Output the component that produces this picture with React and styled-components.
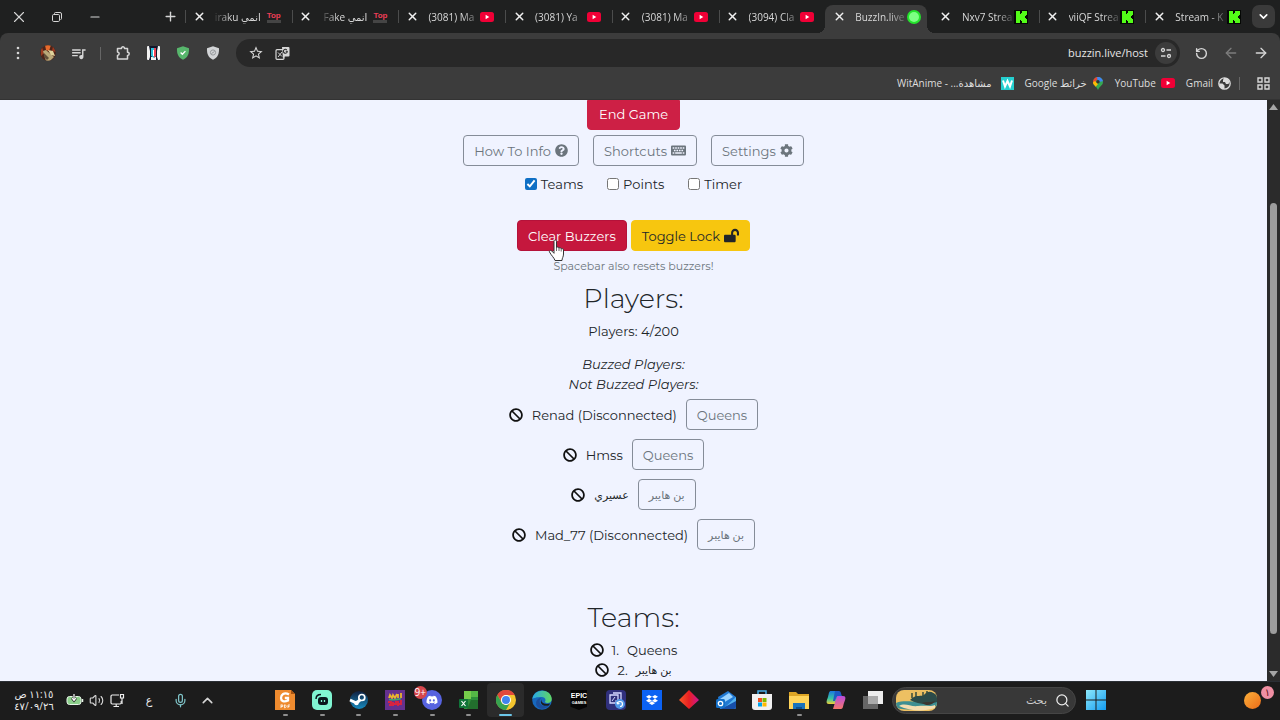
import React from "react";
import styled, { createGlobalStyle, css } from "styled-components";
import { FaQuestionCircle, FaKeyboard, FaCog, FaLockOpen, FaBan, FaDropbox, FaDiscord } from "react-icons/fa";
import { MdQueueMusic, MdStarBorder } from "react-icons/md";
import { X, Plus, Minus, ChevronDown, ChevronUp, RotateCcw, ArrowLeft, ArrowRight, Search, Mic, Volume2 } from "lucide-react";

const Global = createGlobalStyle`
  * { box-sizing: border-box; }
  html, body { margin: 0; height: 100%; overflow: hidden; }
  #root { height: 100vh; }
  button, input { font: inherit; margin: 0; }
  svg { display: block; flex: none; }
`;

const uiFont = `"Open Sans", "Noto Sans", "DejaVu Sans", sans-serif`;

/* ---------- shell ---------- */
const Shell = styled.div`
  display: flex;
  flex-direction: column;
  height: 100vh;
  background: #1f2020;
  color: #dcdcdc;
  font: 10px/16px ${uiFont};
`;

const IconButton = styled.button`
  display: flex;
  align-items: center;
  justify-content: center;
  flex: none;
  width: ${(p) => p.$w || 30}px;
  height: ${(p) => p.$h || 26}px;
  padding: 0;
  border: 0;
  background: none;
  color: ${(p) => p.$color || "#d6d6d6"};
`;

/* ---------- tab strip ---------- */
const TabStrip = styled.header`
  display: flex;
  align-items: stretch;
  height: 33px;
  flex: none;
`;

const WindowButtons = styled.div`
  display: flex;
  align-items: center;
  width: 185px;
  flex: none;
`;

const NewTab = styled(IconButton)`
  margin-left: auto;
`;

const Tabs = styled.nav`
  display: flex;
  flex: 1;
  min-width: 0;
`;

const TabItem = styled.div`
  position: relative;
  display: flex;
  align-items: center;
  flex: 1 1 0;
  min-width: 0;
  padding: 0 11px 0 4px;
  border-radius: 8px 8px 0 0;
  ${(p) =>
    p.$active &&
    css`
      background: #3c3c3c;
      margin: 5px 5px 0 0;
      padding: 0 6px 5px 4px;
      &::before,
      &::after {
        content: "";
        position: absolute;
        bottom: 0;
        width: 8px;
        height: 8px;
      }
      &::before {
        left: -8px;
        background: radial-gradient(circle at 0 0, transparent 8px, #3c3c3c 8px);
      }
      &::after {
        right: -8px;
        background: radial-gradient(circle at 100% 0, transparent 8px, #3c3c3c 8px);
      }
    `}
  ${(p) =>
    p.$divided &&
    css`
      background: linear-gradient(#4b4c4c, #4b4c4c) 0 50% / 1px 13px no-repeat;
    `}
`;

const TabTitle = styled.span`
  flex: 1;
  min-width: 0;
  margin: 0 ${(p) => (p.dir === "rtl" ? 6 : 0)}px 0 6px;
  white-space: nowrap;
  color: #d8d8d8;
  mask-image: linear-gradient(${(p) => (p.dir === "rtl" ? "to left" : "to right")}, #000 65%, rgba(0, 0, 0, 0.15));
`;

const TabSearch = styled(IconButton)`
  margin: 5px 5px 5px 0;
  border-radius: 7px;
  background: #3a3a3a;
  color: #fff;
`;

/* ---------- toolbar ---------- */
const Toolbar = styled.div`
  flex: none;
  height: 67px;
  padding-top: 6px;
  background: #3c3c3c;
  border-radius: 8px 8px 0 0;
  border-bottom: 1px solid #333;
`;

const ToolRow = styled.div`
  display: flex;
  align-items: center;
  height: 28px;
  padding: 0 4px 0 3px;
`;

const Divider = styled.span`
  width: 1px;
  height: 13px;
  margin: 0 ${(p) => p.$gap}px;
  background: #666;
`;

const Omnibox = styled.form`
  display: flex;
  align-items: center;
  flex: 1;
  min-width: 0;
  height: 28px;
  margin: 0 6px 0 8px;
  padding: 0 3px 0 6px;
  border-radius: 14px;
  background: #282828;
`;

const Address = styled.input`
  flex: 1;
  min-width: 0;
  padding: 0 7px;
  border: 0;
  outline: 0;
  background: none;
  color: #e6e6e6;
  font-size: 11px;
  text-align: right;
`;

const SiteInfo = styled(IconButton)`
  border-radius: 50%;
  background: #3c3c3c;
`;

const BookmarkRow = styled.nav`
  display: flex;
  align-items: center;
  justify-content: flex-end;
  gap: 11px;
  height: 32px;
  padding-right: 2px;
`;

const Bookmark = styled.a`
  display: flex;
  align-items: center;
  gap: ${(p) => p.$gap || 5}px;
  color: #dedede;
  text-decoration: none;
  white-space: nowrap;
`;

const BookmarkEnd = styled.div`
  display: flex;
  align-items: center;
`;

/* ---------- web page ---------- */
const Viewport = styled.div`
  display: flex;
  flex: 1;
  min-height: 0;
`;

const Page = styled.main`
  display: flex;
  flex-direction: column;
  align-items: center;
  flex: 1;
  min-width: 0;
  overflow: hidden;
  background: #f0f3ff;
  color: #212529;
  font: 13px/20px Montserrat, Inter, "DejaVu Sans", sans-serif;
`;

const palette = {
  danger: css`background: #cd2045; border-color: #cd2045; color: #fff;`,
  pressed: css`background: #c5173d; border-color: #b5123a; color: #fff;`,
  warning: css`background: #f7c60f; border-color: #f7c60f; color: #212529;`,
  outline: css`background: none; border-color: #858c98; color: #6c757d;`,
};

const Button = styled.button`
  position: relative;
  display: inline-flex;
  align-items: center;
  justify-content: center;
  gap: 4px;
  height: 31px;
  padding: 0 10px;
  border: 1px solid;
  border-radius: 4px;
  white-space: nowrap;
  ${(p) => palette[p.$variant]}
`;

const EndButton = styled(Button)`
  height: 30px;
  padding: 0 11px 2px;
  border-radius: 0 0 4px 4px;
`;

const ButtonRow = styled.div`
  display: flex;
  flex: none;
  gap: ${(p) => p.$gap}px;
  margin-top: ${(p) => p.$top}px;
`;

const Option = styled.label`
  display: flex;
  align-items: center;
  gap: 4px;
`;

const Check = styled.input`
  width: 12px;
  height: 12px;
  accent-color: #0f6fc5;
`;

const Hint = styled.small`
  margin-top: 7px;
  font-size: 11px;
  line-height: 16px;
  color: #6c757d;
`;

const Heading = styled.h2`
  margin: ${(p) => p.$top}px 0 5px;
  font-size: 27px;
  font-weight: 300;
  line-height: 34px;
`;

const Count = styled.p`
  margin: 0 0 13px;
`;

const Group = styled.em`
  font-style: italic;
`;

const PlayerList = styled.ul`
  display: flex;
  flex-direction: column;
  align-items: center;
  gap: 9px;
  margin: 5px 0 0;
  padding: 0;
  list-style: none;
`;

const Player = styled.li`
  display: flex;
  align-items: center;
  gap: 9px;
`;

const TeamList = styled.ul`
  margin: 0;
  padding: 0;
  list-style: none;
`;

const Team = styled.li`
  display: flex;
  align-items: center;
  justify-content: center;
  gap: 8px;
`;

const Name = styled.span`
  &:lang(ar) {
    font-size: 11px;
  }
`;

const Kick = styled(IconButton)`
  color: #111;
`;

const Pointer = styled.svg`
  position: absolute;
  left: 30px;
  top: 18px;
  z-index: 2;
`;

const Scrollbar = styled.div`
  display: flex;
  flex-direction: column;
  align-items: center;
  width: 13px;
  flex: none;
  padding: 4px 0;
  background: #2b2b2b;
`;

const Track = styled.div`
  display: flex;
  flex-direction: column;
  flex: 1;
  width: 7px;
`;

const Thumb = styled.div`
  flex: 431;
  border-radius: 4px;
  background: #9d9d9d;
`;

const Space = styled.div`
  flex: ${(p) => p.$grow};
`;

/* ---------- taskbar ---------- */
const Taskbar = styled.footer`
  display: flex;
  align-items: center;
  flex: none;
  height: 39px;
  padding: 0 6px 2px 0;
  background: #1c1c1c;
  border-top: 1px solid #2b2f35;
`;

const Tray = styled.div`
  display: flex;
  align-items: center;
  width: 267px;
  flex: none;
  padding-left: 14px;
`;

const Clock = styled.time`
  width: 40px;
  margin-right: 10px;
  line-height: 12px;
  text-align: center;
  color: #ececec;
  white-space: nowrap;
`;

const Language = styled.button`
  width: 34px;
  margin-left: 4px;
  padding: 0;
  border: 0;
  background: none;
  color: #eee;
  font-size: 11px;
`;

const Apps = styled.div`
  display: flex;
  flex: 0 1 624px;
`;

const AppButton = styled.button`
  position: relative;
  display: flex;
  align-items: center;
  justify-content: center;
  flex: 1;
  height: 34px;
  padding: 0;
  border: 0;
  border-radius: 4px;
  background: ${(p) => (p.$active ? "#2b2b2b" : "none")};
  &::after {
    content: "";
    position: absolute;
    bottom: 1px;
    width: ${(p) => (p.$active ? 13 : 5)}px;
    height: 2px;
    border-radius: 1px;
    background: ${(p) => (p.$active ? "#6cc6e8" : p.$open ? "#8f8f8f" : "transparent")};
  }
`;

const Badge = styled.span`
  position: absolute;
  z-index: 1;
  height: 13px;
  min-width: 13px;
  border-radius: 7px;
  line-height: 13px;
  text-align: center;
  background: ${(p) => p.$bg};
  color: ${(p) => p.$fg};
  top: ${(p) => p.$top}px;
  ${(p) => p.$side}: 0;
`;

const SearchBox = styled.label`
  display: flex;
  align-items: center;
  flex: 0 1 184px;
  min-width: 0;
  height: 27px;
  margin-left: 1px;
  padding: 0 5px 0 3px;
  border: 1px solid #454545;
  border-radius: 14px;
  background: #383838;
  color: #eee;
`;

const SearchInput = styled.input`
  flex: 1;
  min-width: 0;
  padding: 0 8px;
  border: 0;
  outline: 0;
  background: none;
  color: #ccc;
  font-size: 11px;
  &::placeholder { color: #ccc; opacity: 1; }
`;

const Start = styled(IconButton)`
  margin-left: 4px;
`;

const Widgets = styled(IconButton)`
  position: relative;
  margin-left: auto;
`;

/* ---------- drawings ---------- */
const YouTube = () => (
  <svg width="14" height="14" viewBox="0 0 14 14">
    <rect y="2" width="14" height="10" rx="2.5" fill="#f00036" />
    <path d="M5.6 4.8v4.4L9.3 7z" fill="#fff" />
  </svg>
);

const KickLogo = () => (
  <svg width="14" height="14" viewBox="0 0 14 14">
    <rect width="14" height="14" fill="#050805" />
    <path d="M2 1h4v3h1V3h1V1h5v4h-1v1h-1v2h1v1h1v4H8v-2H7v-1H6v3H2z" fill="#53fc18" />
  </svg>
);

const TopLogo = styled.span`
  display: flex;
  justify-content: center;
  width: 14px;
  color: #ee3e57;
  font: bold 8px/9px "Liberation Sans Narrow", "Liberation Sans", sans-serif;
  border-bottom: 3px solid #454545;
`;

const Buzz = () => (
  <svg width="14" height="14" viewBox="0 0 14 14">
    <circle cx="7" cy="7" r="7" fill="#24e32c" />
    <circle cx="7" cy="7" r="5" fill="#7dff84" />
  </svg>
);

const Restore = () => (
  <svg width="10" height="10" viewBox="0 0 10 10" fill="none" stroke="currentColor">
    <rect x=".5" y="2.5" width="7" height="7" rx="1.2" />
    <path d="M2.5 2V1.5a1 1 0 0 1 1-1h4.500a1.500 1.500 0 0 1 1.500 1.500V6.500a1 1 0 0 1-1 1" />
  </svg>
);

const Dots = () => (
  <svg width="4" height="14" viewBox="0 0 4 14" fill="currentColor">
    <circle cx="2" cy="2" r="1.3" /><circle cx="2" cy="7" r="1.3" /><circle cx="2" cy="12" r="1.3" />
  </svg>
);

const Avatar = () => (
  <svg width="16" height="16" viewBox="0 0 16 16">
    <clipPath id="avatar"><circle cx="8" cy="8" r="7.800" /></clipPath>
    <g clipPath="url(#avatar)">
      <rect width="16" height="16" fill="#4d241a" />
      <path d="M5 0h6L9 6 6 5z" fill="#e66b2c" />
      <path d="M2 2l2 6-3 3V3zM13 1l3 6-4-1z" fill="#9b3a20" />
      <path d="M3 6l3-1 8 7-4 4H6z" fill="#b9a778" />
      <path d="M8 5l5 1 2 5-4-1z" fill="#e1d39b" />
      <path d="M4 8l5 5-2 2-3-3z" fill="#604e39" />
    </g>
  </svg>
);

const Puzzle = () => (
  <svg width="16" height="16" viewBox="0 0 16 16" fill="none" stroke="currentColor" strokeWidth="1.5" strokeLinejoin="round">
    <path d="M2.500 3.500h4c-.3-2.200 3.200-2.200 3 0h3v3.700c2.300 0 2.300 3.200 0 3.200v3.600h-10v-3.500c2.200-.6 2.200-3 0-3.500z" />
  </svg>
);

const Glitch = () => (
  <svg width="13" height="14" viewBox="0 0 13 14">
    <rect width="13" height="14" rx="1" fill="#f2f2f2" />
    <path d="M2 0h9l-1 5v6l1 3H9v-3H4v3H2l1-3V5z" fill="#12162b" />
    <path d="M4 2h5v8l-2 2-3-2z" fill="#2ec2dc" />
    <path d="M7 2h2v8L7 12z" fill="#ef4456" />
    <path d="M6 4h1v6H6z" fill="#fff" />
  </svg>
);

const Shield = ({ fill, check }) => (
  <svg width="14" height="14" viewBox="0 0 14 14">
    <path d="M7 .3l6 2c.3 5-1 9.300-6 11.400C2 11.600.7 7.300 1 2.300z" fill={fill} />
    {check ? (
      <path d="M4.600 6.500l1.800 1.800 3-3.200" fill="none" stroke="#fff" strokeWidth="1.300" />
    ) : (
      <g fill="none" stroke="#96999c"><circle cx="7" cy="6.500" r="2.600" /><path d="M5.500 7.500l3-2" /></g>
    )}
  </svg>
);

const Translate = () => (
  <svg width="15" height="15" viewBox="0 0 15 15">
    <rect x="1" y="3.700" width="8" height="9.600" rx="1" fill="none" stroke="#d6d6d6" strokeWidth="1.200" />
    <path d="M3 6.500l4 4M7 6l-4 5" stroke="#d6d6d6" fill="none" />
    <path d="M7 1h6.500a1 1 0 0 1 1 1v7.500a1 1 0 0 1-1 1H9.500L8 13z" fill="#d6d6d6" />
    <path d="M12.400 5.300H10.700M12.400 5.300a2 2 0 1 1-.6-1.500" stroke="#282828" strokeWidth="1.100" fill="none" />
  </svg>
);

const Tune = () => (
  <svg width="12" height="12" viewBox="0 0 12 12" fill="none" stroke="currentColor" strokeWidth="1.300">
    <circle cx="3" cy="3" r="1.500" /><path d="M6.500 3H11M1 9h4.500" /><circle cx="9" cy="9" r="1.500" />
  </svg>
);

const WitLogo = () => (
  <svg width="13" height="13" viewBox="0 0 13 13">
    <rect width="13" height="13" fill="#25cfd0" />
    <path d="M2 3.500l2 6 2.500-5.500L9 9.500l2-6" fill="none" stroke="#fff" strokeWidth="2" />
  </svg>
);

const MapPin = () => (
  <svg width="12" height="13" viewBox="0 0 12 13">
    <clipPath id="pin"><path d="M6 0a5 5 0 0 1 5 5c0 3.500-3.500 4-5 8-1.500-4-5-4.500-5-8a5 5 0 0 1 5-5z" /></clipPath>
    <g clipPath="url(#pin)">
      <rect width="12" height="13" fill="#34a853" />
      <path d="M0 0h7L2 7H0z" fill="#ea4335" /><path d="M5 0h7v4L6 5z" fill="#4285f4" />
      <path d="M0 6l3-2 3 3-4 5z" fill="#fbbc04" />
    </g>
    <circle cx="6" cy="4.800" r="1.700" fill="#333" />
  </svg>
);

const Globe = () => (
  <svg width="13" height="13" viewBox="0 0 13 13">
    <circle cx="6.500" cy="6.500" r="5.700" fill="none" stroke="#dcdcdc" strokeWidth="1.300" />
    <path d="M1 6.500h3.500l2 2v3.500C3.500 12 1 9.500 1 6.500zM6 1h3l2.500 3.500-1 2.500H8L7 5H5V3z" fill="#dcdcdc" />
  </svg>
);

const GridIcon = () => (
  <svg width="13" height="13" viewBox="0 0 13 13" fill="none" stroke="#d6d6d6" strokeWidth="1.400">
    <path d="M1 1h4v4H1zM8 1h4v4H8zM1 8h4v4H1zM8 8h4v4H8z" />
  </svg>
);

const Hand = () => (
  <Pointer width="17" height="23" viewBox="0 0 17 23" aria-hidden="true">
    <path
      d="M6 2.500c0-2 2.500-2 2.500 0v6c.5-.8 2.300-.5 2.400.6.700-.8 2.300-.3 2.300.7.800-.6 2.300 0 2.300 1.200v4c0 3-1.500 4-1.500 6.500H7c-.3-2-4-5.500-5.500-8.500-.6-1.300 1.200-2.300 2.300-1l2.200 2.300z"
      fill="#fff" stroke="#333" strokeWidth="1"
    />
    <path d="M8.500 8v4M11 9v3M13.200 10v2.500" stroke="#444" strokeWidth=".8" />
  </Pointer>
);

const ArrowTip = ({ down }) => (
  <svg width="9" height="6" viewBox="0 0 9 6"><path d={down ? "M0 0h9L4.500 6z" : "M0 6h9L4.500 0z"} fill="#a5a5a5" /></svg>
);

const Battery = () => (
  <svg width="18" height="14" viewBox="0 0 18 14">
    <rect x="1" y="3.500" width="14" height="8" rx="2.500" fill="#8ccf8b" stroke="#e8f5e8" />
    <path d="M16.500 6v3" stroke="#e8f5e8" strokeWidth="1.500" />
    <path d="M8 1v6M6 5l2 2.500L10 5" stroke="#1c1c1c" fill="none" strokeWidth="2.600" />
    <path d="M8 1v6M6 5l2 2.500L10 5" stroke="#fff" fill="none" strokeWidth="1.200" />
  </svg>
);

const Network = () => (
  <svg width="15" height="15" viewBox="0 0 15 15" fill="none" stroke="#eee" strokeWidth="1.200">
    <path d="M9 2H2.200A1.200 1.200 0 0 0 1 3.200v6.600A1.200 1.200 0 0 0 2.200 11H10a1.200 1.200 0 0 0 1.200-1.200V8M3.500 13.500h5.500M6.200 11v2.500" />
    <path d="M10.500 1.500h3v3.500h-3zM12 5v6" />
  </svg>
);

const EpicShield = styled.span`
  display: flex;
  flex-direction: column;
  align-items: center;
  justify-content: center;
  width: 17px;
  height: 20px;
  padding-bottom: 3px;
  background: #050505;
  color: #fff;
  font: bold 7px/8px "Liberation Sans Narrow", "Liberation Sans", sans-serif;
  clip-path: polygon(0 0, 100% 0, 100% 84%, 50% 100%, 0 84%);
`;

const EpicSub = styled.span`
  font-size: 4px;
  line-height: 5px;
`;

const art = (children) => (
  <svg width="20" height="20" viewBox="0 0 20 20">{children}</svg>
);

const apps = [
  { name: "PDF", open: true, icon: art(<>
    <path d="M0 0h16l4 4v16H0z" fill="#ee8b2f" /><path d="M16 0l4 4h-4z" fill="#a75310" />
    <path d="M14 4.500C9 1.500 6 5 6 8s3 4.500 7 2.500V8H9.800" fill="none" stroke="#fff" strokeWidth="2.300" />
    <path d="M6 14.500v3.500M6 15h1.800v1.500H6M9.500 14.800v3c2.300 0 2.300-3 0-3M13 18v-3h2M13 16.500h1.500" stroke="#fff" strokeWidth=".8" fill="none" /></>) },
  { name: "Streamlabs", open: true, icon: art(<>
    <rect width="20" height="20" rx="5" fill="#80f5d2" />
    <rect x="6" y="7" width="10" height="8" rx="3" fill="#09161d" />
    <path d="M4 9c0-3 1.500-4.500 5-4.500" stroke="#09161d" strokeWidth="1.500" fill="none" />
    <path d="M9.500 10v2M12.500 10v2" stroke="#80f5d2" strokeWidth="1.300" /></>) },
  { name: "Steam", open: true, icon: art(<>
    <defs><linearGradient id="steam" x1="0" y1="0" x2="0" y2="1"><stop stopColor="#11203f" /><stop offset="1" stopColor="#178bbf" /></linearGradient></defs>
    <circle cx="10" cy="10" r="9" fill="url(#steam)" />
    <circle cx="12.800" cy="7.500" r="3" fill="none" stroke="#fff" strokeWidth="1.700" />
    <path d="M1 10l6.500 3L11 10" stroke="#fff" strokeWidth="3" fill="none" /><circle cx="7.500" cy="13" r="2.300" fill="#fff" /></>) },
  { name: "Game", open: true, icon: art(<>
    <rect width="20" height="20" fill="#65308f" />
    <path d="M4 8l1-3 2 3 1-3 2 3 2-4M13 8V4M16 8V3" stroke="#e9b52f" strokeWidth="1.800" fill="none" />
    <path d="M4 9.500c4 0 6 1 12-1" stroke="#43a66a" strokeWidth="1.500" fill="none" />
    <path d="M3 12h3v3H4M8 12v4M8 14h3v-3M13 11v5M13 14h3v-4" stroke="#db2440" strokeWidth="1.900" fill="none" /></>) },
  { name: "Discord", open: true, badge: "9+", icon: art(<>
    <circle cx="10" cy="10" r="10" fill="#5763e0" /><FaDiscord x="4" y="4" size={12} color="#fff" /></>) },
  { name: "Excel", open: true, icon: art(<>
    <path d="M5 1h14v18H5z" fill="#2d8f3b" /><path d="M5 1h7v8H5z" fill="#76ce4b" /><path d="M12 1h7v6h-7z" fill="#54b746" /><path d="M12 10h7v9H8z" fill="#226f2d" />
    <rect x="0" y="9" width="9" height="9" rx="1" fill="#107439" /><path d="M2.500 11l4 5M6.500 11l-4 5" stroke="#fff" strokeWidth="1.200" /></>) },
  { name: "Chrome", active: true, icon: art(<>
    <circle cx="10" cy="10" r="10" fill="#f4c52e" />
    <path d="M1.300 5A10 10 0 0 1 18.700 5H10a5 5 0 0 0-4.300 7.500z" fill="#e0483b" />
    <path d="M1.300 5A10 10 0 0 0 10 20l4.300-7.500A5 5 0 0 1 5.700 12.500z" fill="#37a350" />
    <circle cx="10" cy="10" r="5" fill="#fff" /><circle cx="10" cy="10" r="4" fill="#4084ee" /></>) },
  { name: "Edge", icon: art(<>
    <defs><linearGradient id="edge"><stop stopColor="#28a9e8" /><stop offset="1" stopColor="#62d85f" /></linearGradient></defs>
    <circle cx="10" cy="10" r="9.800" fill="#1768bd" />
    <path d="M.3 9C2-2 19-2 19.800 9c0 4-5 5-7 3 2-3-.5-5-3-5C5 7 1 8 .3 9z" fill="url(#edge)" />
    <path d="M9 8c-4 5 1 10 8 7.500C12 22 2 18 4.500 11 5.500 8.500 8 7.500 9 8z" fill="#1c4e9c" />
    <path d="M10 9c-2 3 2 6 8 4.500l-1 2c-7 1.500-10-3-7-6.500z" fill="#1c1c1c" /></>) },
  { name: "Epic Games", icon: <EpicShield>EPIC<EpicSub>GAMES</EpicSub></EpicShield> },
  { name: "Capture", icon: art(<>
    <rect width="20" height="20" rx="4" fill="#30307c" />
    <path d="M4 5h8v8H4zM7 3h8v7" fill="none" stroke="#d5d8ff" strokeWidth="1.300" /><path d="M6 11l3-4M9 11h2" stroke="#d5d8ff" />
    <circle cx="14" cy="14" r="5" fill="#5197e8" /><path d="M11.500 14a2.500 2.500 0 1 1 2.500 2.500M11.500 14l-.5-2M11.500 14l2-.5" stroke="#fff" strokeWidth="1.200" fill="none" /></>) },
  { name: "Dropbox", icon: art(<><rect width="20" height="20" fill="#0b62f3" /><FaDropbox x="4" y="4" size={12} color="#fff" /></>) },
  { name: "Diamond", icon: art(<>
    <defs><linearGradient id="dia"><stop stopColor="#f65a28" /><stop offset=".5" stopColor="#e91f22" /><stop offset="1" stopColor="#cb1694" /></linearGradient></defs>
    <path d="M10 0l10 10-10 9L0 10z" fill="url(#dia)" /></>) },
  { name: "Outlook", icon: art(<>
    <path d="M2 7l10-6 8 6v10a2 2 0 0 1-2 2H4z" fill="#2179d3" /><path d="M4 9l9-6 4 4-10 6z" fill="#9bd4ff" /><path d="M20 7v10a2 2 0 0 1-2 2H7z" fill="#54b3ef" /><path d="M5 19l15-8v6a2 2 0 0 1-2 2z" fill="#174fa9" />
    <rect y="9" width="9" height="9" rx="1.500" fill="#1470c8" /><circle cx="4.500" cy="13.500" r="2.200" fill="none" stroke="#fff" strokeWidth="1.300" /></>) },
  { name: "Store", icon: art(<>
    <path d="M6 4V1h8v3" fill="none" stroke="#48aee8" strokeWidth="1.500" /><path d="M0 4h20v13a3 3 0 0 1-3 3H3a3 3 0 0 1-3-3z" fill="#f1f1f1" />
    <path d="M6 8h4v4H6z" fill="#f25022" /><path d="M10.500 8h4v4h-4z" fill="#7fba00" /><path d="M6 12.500h4v4H6z" fill="#00a4ef" /><path d="M10.500 12.500h4v4h-4z" fill="#ffb900" /></>) },
  { name: "Files", open: true, icon: art(<>
    <path d="M0 2h7l2 2h11v5H0z" fill="#dda525" /><path d="M0 6h20v13H0z" fill="#ffd45a" /><path d="M4 13h12v6H4z" fill="#1972bb" /><path d="M7 17h6v2H7z" fill="#0a4d8e" /></>) },
  { name: "Copilot", icon: art(<>
    <defs><linearGradient id="cop1" x1="0" y1="0" x2="0" y2="1"><stop stopColor="#1a78e0" /><stop offset=".6" stopColor="#3bc6a0" /><stop offset="1" stopColor="#f3cf35" /></linearGradient>
    <linearGradient id="cop2" x1="0" y1="0" x2="0" y2="1"><stop stopColor="#b84cdd" /><stop offset="1" stopColor="#f6766b" /></linearGradient></defs>
    <path d="M5 1h8l-4 13H3c-4 0-2-4-1-7C3 3 3 1 5 1z" fill="url(#cop1)" />
    <path d="M15 19H7l4-13h6c4 0 2 4 1 7s-1 6-3 6z" fill="url(#cop2)" /><path d="M9 1h4c2 0 2 3 3 5h-4c-1.500 0-2 2-3 5H7z" fill="#1d5ac5" /></>) },
  { name: "Task view", icon: art(<>
    <path d="M0 6h15v13H0z" fill="#666" /><path d="M5 1h15v13H5z" fill="#ededed" /><path d="M5 6h10v8H5z" fill="#aaa" /></>) },
];

const tabs = [
  { title: "انمي iraku", rtl: true, icon: <TopLogo>Top</TopLogo>, divided: true },
  { title: "انمي Fake", rtl: true, icon: <TopLogo>Top</TopLogo>, divided: true },
  { title: "(3081) Ma", icon: <YouTube />, divided: true },
  { title: "(3081) Ya", icon: <YouTube />, divided: true },
  { title: "(3081) Ma", icon: <YouTube />, divided: true },
  { title: "(3094) Cla", icon: <YouTube />, divided: true },
  { title: "BuzzIn.live", icon: <Buzz />, active: true },
  { title: "Nxv7 Strea", icon: <KickLogo /> },
  { title: "viiQF Strea", icon: <KickLogo />, divided: true },
  { title: "Stream - K", icon: <KickLogo />, divided: true },
];

const players = [
  { name: "Renad (Disconnected)", team: "Queens" },
  { name: "Hmss", team: "Queens" },
  { name: "عسيري", lang: "ar", team: "بن هايبر", teamLang: "ar" },
  { name: "Mad_77 (Disconnected)", team: "بن هايبر", teamLang: "ar" },
];

const teams = [
  { name: "Queens" },
  { name: "بن هايبر", lang: "ar" },
];

export default function App() {
  return (
    <Shell>
      <Global />
      <TabStrip>
        <WindowButtons>
          <IconButton $w={38} aria-label="Close window"><X size={18} strokeWidth={1.5} /></IconButton>
          <IconButton $w={38} aria-label="Restore"><Restore /></IconButton>
          <IconButton $w={38} aria-label="Minimize"><Minus size={14} strokeWidth={1.8} /></IconButton>
          <NewTab aria-label="New tab"><Plus size={15} strokeWidth={2.2} /></NewTab>
        </WindowButtons>
        <Tabs>
          {tabs.map((t, i) => (
            <TabItem key={i} $active={t.active} $divided={t.divided}>
              <IconButton $w={20} $h={20} $color="#f0f0f0" aria-label="Close tab"><X size={13} strokeWidth={2.7} /></IconButton>
              <TabTitle dir={t.rtl ? "rtl" : "ltr"}>{t.title}</TabTitle>
              {t.icon}
            </TabItem>
          ))}
        </Tabs>
        <TabSearch $w={23} $h={23} aria-label="Search tabs"><ChevronDown size={13} strokeWidth={3} /></TabSearch>
      </TabStrip>

      <Toolbar>
        <ToolRow>
          <IconButton aria-label="Menu"><Dots /></IconButton>
          <IconButton aria-label="Profile"><Avatar /></IconButton>
          <IconButton aria-label="Media"><MdQueueMusic size={17} /></IconButton>
          <Divider $gap={7} />
          <IconButton aria-label="Extensions"><Puzzle /></IconButton>
          <IconButton aria-label="Glitch"><Glitch /></IconButton>
          <IconButton aria-label="Safe browsing"><Shield fill="#57b66c" check /></IconButton>
          <IconButton aria-label="Ad blocker"><Shield fill="#d3d5d7" /></IconButton>
          <Omnibox>
            <IconButton $w={27} type="button" aria-label="Bookmark"><MdStarBorder size={16} /></IconButton>
            <IconButton $w={27} type="button" aria-label="Translate"><Translate /></IconButton>
            <Address aria-label="Address" defaultValue="buzzin.live/host" />
            <SiteInfo $w={22} $h={22} type="button" aria-label="Site information"><Tune /></SiteInfo>
          </Omnibox>
          <IconButton aria-label="Reload"><RotateCcw size={13} strokeWidth={2.6} /></IconButton>
          <IconButton $color="#7c7c7c" aria-label="Forward"><ArrowLeft size={16} /></IconButton>
          <IconButton aria-label="Back"><ArrowRight size={16} /></IconButton>
        </ToolRow>
        <BookmarkRow>
          <Bookmark href="#wit" $gap={9}><span dir="rtl">مشاهدة... - WitAnime</span><WitLogo /></Bookmark>
          <Bookmark href="#maps"><span dir="rtl">خرائط Google</span><MapPin /></Bookmark>
          <Bookmark href="#youtube">YouTube<YouTube /></Bookmark>
          <BookmarkEnd>
            <Bookmark href="#gmail">Gmail<Globe /></Bookmark>
            <Divider $gap={8} />
            <IconButton aria-label="All bookmarks"><GridIcon /></IconButton>
          </BookmarkEnd>
        </BookmarkRow>
      </Toolbar>

      <Viewport>
        <Page>
          <EndButton $variant="danger">End Game</EndButton>
          <ButtonRow $top={5} $gap={14}>
            <Button $variant="outline">How To Info <FaQuestionCircle size={13} /></Button>
            <Button $variant="outline">Shortcuts <FaKeyboard size={15} /></Button>
            <Button $variant="outline">Settings <FaCog size={13} /></Button>
          </ButtonRow>
          <ButtonRow $top={8} $gap={24}>
            <Option><Check type="checkbox" defaultChecked />Teams</Option>
            <Option><Check type="checkbox" />Points</Option>
            <Option><Check type="checkbox" />Timer</Option>
          </ButtonRow>
          <ButtonRow $top={26} $gap={4}>
            <Button $variant="pressed">Clear Buzzers<Hand /></Button>
            <Button $variant="warning">Toggle Lock <FaLockOpen size={15} /></Button>
          </ButtonRow>
          <Hint>Spacebar also resets buzzers!</Hint>
          <Heading $top={8}>Players:</Heading>
          <Count>Players: 4/200</Count>
          <Group>Buzzed Players:</Group>
          <Group>Not Buzzed Players:</Group>
          <PlayerList>
            {players.map((p) => (
              <Player key={p.name}>
                <Kick $w={14} $h={20} aria-label="Remove player"><FaBan size={14} /></Kick>
                <Name lang={p.lang}>{p.name}</Name>
                <Button $variant="outline"><Name lang={p.teamLang}>{p.team}</Name></Button>
              </Player>
            ))}
          </PlayerList>
          <Heading $top={51}>Teams:</Heading>
          <TeamList>
            {teams.map((t, i) => (
              <Team key={t.name}>
                <Kick $w={14} $h={20} aria-label="Remove team"><FaBan size={14} /></Kick>
                <span>{i + 1}.</span>
                <Name lang={t.lang}>{t.name}</Name>
              </Team>
            ))}
          </TeamList>
        </Page>
        <Scrollbar>
          <ArrowTip />
          <Track><Space $grow={93} /><Thumb /><Space $grow={37} /></Track>
          <ArrowTip down />
        </Scrollbar>
      </Viewport>

      <Taskbar>
        <Tray>
          <Clock dir="rtl">١١:١٥ ص<br />٤٧/٠٩/٢٦</Clock>
          <IconButton $w={22} aria-label="Battery"><Battery /></IconButton>
          <IconButton $w={20} aria-label="Volume"><Volume2 size={15} strokeWidth={1.8} /></IconButton>
          <IconButton $w={22} aria-label="Network"><Network /></IconButton>
          <Language>ع</Language>
          <IconButton $w={28} $color="#7fc4c8" aria-label="Microphone"><Mic size={15} /></IconButton>
          <IconButton $w={26} aria-label="Hidden icons"><ChevronUp size={17} strokeWidth={2.2} /></IconButton>
        </Tray>
        <Apps>
          {apps.map((a) => (
            <AppButton key={a.name} $open={a.open} $active={a.active} aria-label={a.name}>
              {a.badge && <Badge $bg="#d6474d" $fg="#fff" $top={3} $side="left">{a.badge}</Badge>}
              {a.icon}
            </AppButton>
          ))}
        </Apps>
        <SearchBox>
          <svg width="41" height="21" viewBox="0 0 41 21">
            <clipPath id="scene"><rect width="41" height="21" rx="8" /></clipPath>
            <g clipPath="url(#scene)">
              <rect width="41" height="21" fill="#edc062" />
              <path d="M0 13c10-4 20 1 41-3v6c-12 3-25 5-41 2z" fill="#3d8f92" />
              <path d="M14 10C20 3 26 8 29 4s9-2 12 2v6c-8 3-18 3-27-2z" fill="#2c4b49" />
              <path d="M16 8V3M20 7V2M27 7V2M31 5V1" stroke="#344b3d" strokeWidth="1.500" />
              <path d="M3 16c6-4 11 1 19 0s12 1 17-1v3c-12 4-25 3-36-2z" fill="#f3ddb0" />
              <path d="M26 13c4-2 8 0 13-2-3 5-9 5-13 2z" fill="#3a3530" />
            </g>
          </svg>
          <SearchInput dir="rtl" placeholder="بحث" aria-label="بحث" />
          <Search size={15} />
        </SearchBox>
        <Start $w={32} aria-label="Start">
          <svg width="20" height="20" viewBox="0 0 20 20">
            <defs><linearGradient id="win" x1="0" y1="0" x2="1" y2="1"><stop stopColor="#8de8fb" /><stop offset="1" stopColor="#139cf0" /></linearGradient></defs>
            <path d="M0 0h9.500v9.500H0zM10.500 0H20v9.500h-9.500zM0 10.500h9.500V20H0zM10.500 10.500H20V20h-9.500z" fill="url(#win)" />
          </svg>
        </Start>
        <Widgets $w={44} $h={34} aria-label="Widgets">
          <svg width="17" height="17" viewBox="0 0 17 17">
            <defs><linearGradient id="sun" x1="0" y1="0" x2="1" y2="1"><stop stopColor="#fbb03b" /><stop offset="1" stopColor="#ec6b17" /></linearGradient></defs>
            <circle cx="8.500" cy="8.500" r="8.500" fill="url(#sun)" />
          </svg>
          <Badge $bg="#f08fa3" $fg="#5a1020" $top={3} $side="right">١</Badge>
        </Widgets>
      </Taskbar>
    </Shell>
  );
}
